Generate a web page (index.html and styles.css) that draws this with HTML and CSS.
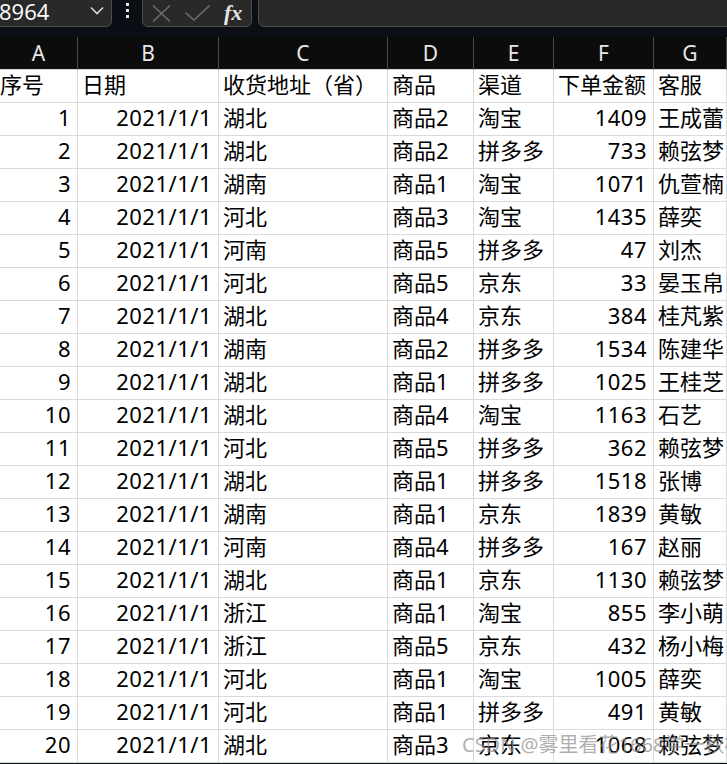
FILE: index.html
```html
<!DOCTYPE html>
<html lang="zh-CN">
<head>
<meta charset="utf-8">
<title>Sheet</title>
<link rel="stylesheet" href="styles.css">
</head>
<body>
<div class="topbar">
  <div class="namebox">
    <span class="ref">8964</span>
    <svg class="chev" width="14" height="9" viewBox="0 0 14 9"><path d="M1 1.5 L7 7.5 L13 1.5" fill="none" stroke="#d8d8d8" stroke-width="1.6"/></svg>
  </div>
  <svg class="dots" width="5" height="16" viewBox="0 0 5 16"><rect x="1" y="1" width="3" height="3" fill="#e6e6e6"/><rect x="1" y="7" width="3" height="3" fill="#e6e6e6"/><rect x="1" y="13" width="3" height="3" fill="#e6e6e6"/></svg>
  <div class="fxbox">
    <svg class="ico" width="19" height="17" viewBox="0 0 19 17"><path d="M1 0.5 L18 16.5 M18 0.5 L1 16.5" stroke="#6a6a6a" stroke-width="1.6" fill="none"/></svg>
    <svg class="ico" width="25" height="16" viewBox="0 0 25 16"><path d="M0.5 7.5 L9 15 L24.5 0.5" stroke="#6a6a6a" stroke-width="1.6" fill="none"/></svg>
    <span class="fx">fx</span>
  </div>
  <div class="inputbox"></div>
</div>
<div class="gap"></div>
<div class="sheet">
  <div class="h">A</div><div class="h">B</div><div class="h">C</div><div class="h">D</div><div class="h">E</div><div class="h">F</div><div class="h">G</div>

  <div class="c a">序号</div><div class="c">日期</div><div class="c">收货地址（省）</div><div class="c">商品</div><div class="c">渠道</div><div class="c">下单金额</div><div class="c">客服</div>

  <div class="c r">1</div><div class="c r">2021/1/1</div><div class="c">湖北</div><div class="c">商品2</div><div class="c">淘宝</div><div class="c r">1409</div><div class="c">王成蕾</div>
  <div class="c r">2</div><div class="c r">2021/1/1</div><div class="c">湖北</div><div class="c">商品2</div><div class="c">拼多多</div><div class="c r">733</div><div class="c">赖弦梦</div>
  <div class="c r">3</div><div class="c r">2021/1/1</div><div class="c">湖南</div><div class="c">商品1</div><div class="c">淘宝</div><div class="c r">1071</div><div class="c">仇萱楠</div>
  <div class="c r">4</div><div class="c r">2021/1/1</div><div class="c">河北</div><div class="c">商品3</div><div class="c">淘宝</div><div class="c r">1435</div><div class="c">薛奕</div>
  <div class="c r">5</div><div class="c r">2021/1/1</div><div class="c">河南</div><div class="c">商品5</div><div class="c">拼多多</div><div class="c r">47</div><div class="c">刘杰</div>
  <div class="c r">6</div><div class="c r">2021/1/1</div><div class="c">河北</div><div class="c">商品5</div><div class="c">京东</div><div class="c r">33</div><div class="c">晏玉帛</div>
  <div class="c r">7</div><div class="c r">2021/1/1</div><div class="c">湖北</div><div class="c">商品4</div><div class="c">京东</div><div class="c r">384</div><div class="c">桂芃紫</div>
  <div class="c r">8</div><div class="c r">2021/1/1</div><div class="c">湖南</div><div class="c">商品2</div><div class="c">拼多多</div><div class="c r">1534</div><div class="c">陈建华</div>
  <div class="c r">9</div><div class="c r">2021/1/1</div><div class="c">湖北</div><div class="c">商品1</div><div class="c">拼多多</div><div class="c r">1025</div><div class="c">王桂芝</div>
  <div class="c r">10</div><div class="c r">2021/1/1</div><div class="c">湖北</div><div class="c">商品4</div><div class="c">淘宝</div><div class="c r">1163</div><div class="c">石艺</div>
  <div class="c r">11</div><div class="c r">2021/1/1</div><div class="c">河北</div><div class="c">商品5</div><div class="c">拼多多</div><div class="c r">362</div><div class="c">赖弦梦</div>
  <div class="c r">12</div><div class="c r">2021/1/1</div><div class="c">湖北</div><div class="c">商品1</div><div class="c">拼多多</div><div class="c r">1518</div><div class="c">张博</div>
  <div class="c r">13</div><div class="c r">2021/1/1</div><div class="c">湖南</div><div class="c">商品1</div><div class="c">京东</div><div class="c r">1839</div><div class="c">黄敏</div>
  <div class="c r">14</div><div class="c r">2021/1/1</div><div class="c">河南</div><div class="c">商品4</div><div class="c">拼多多</div><div class="c r">167</div><div class="c">赵丽</div>
  <div class="c r">15</div><div class="c r">2021/1/1</div><div class="c">湖北</div><div class="c">商品1</div><div class="c">京东</div><div class="c r">1130</div><div class="c">赖弦梦</div>
  <div class="c r">16</div><div class="c r">2021/1/1</div><div class="c">浙江</div><div class="c">商品1</div><div class="c">淘宝</div><div class="c r">855</div><div class="c">李小萌</div>
  <div class="c r">17</div><div class="c r">2021/1/1</div><div class="c">浙江</div><div class="c">商品5</div><div class="c">京东</div><div class="c r">432</div><div class="c">杨小梅</div>
  <div class="c r">18</div><div class="c r">2021/1/1</div><div class="c">河北</div><div class="c">商品1</div><div class="c">淘宝</div><div class="c r">1005</div><div class="c">薛奕</div>
  <div class="c r">19</div><div class="c r">2021/1/1</div><div class="c">河北</div><div class="c">商品1</div><div class="c">拼多多</div><div class="c r">491</div><div class="c">黄敏</div>
  <div class="c r">20</div><div class="c r">2021/1/1</div><div class="c">湖北</div><div class="c">商品3</div><div class="c">京东</div><div class="c r">1068</div><div class="c">赖弦梦</div>
</div>
<div class="watermark">CSDN @雾里看花1668学一秋枫</div>
</body>
</html>
```

FILE: styles.css
```css
html, body {
  margin: 0;
  padding: 0;
}
body {
  width: 727px;
  height: 764px;
  overflow: hidden;
  background: #0b0e14;
  position: relative;
  font-family: "Noto Sans", "Noto Sans CJK SC", sans-serif;
}
.topbar {
  height: 27px;
  display: flex;
  align-items: flex-end;
  background: #0b0e14;
}
.namebox {
  box-sizing: border-box;
  margin-left: -10px;
  width: 122px;
  height: 34px;
  border: 1px solid #4e4e4e;
  border-radius: 6px;
  background: #292929;
  display: flex;
  align-items: center;
  justify-content: space-between;
  padding: 0 7px 0 8px;
}
.ref {
  color: #ffffff;
  font-family: "Open Sans", "Noto Sans", sans-serif;
  font-size: 22px;
  line-height: 20px;
  margin-top: 2px;
}
.chev {
  display: block;
}
.dots {
  display: block;
  margin: 0 0 9px 13px;
}
.fxbox {
  box-sizing: border-box;
  margin-left: 12px;
  width: 110px;
  height: 34px;
  border: 1px solid #4e4e4e;
  border-radius: 6px;
  background: #292929;
  display: flex;
  align-items: center;
  gap: 14px;
  padding: 6px 0 0 9px;
}
.ico {
  display: block;
}
.fx {
  font-family: "Liberation Serif", "DejaVu Serif", serif;
  font-style: italic;
  font-weight: bold;
  font-size: 22px;
  line-height: 20px;
  color: #e6e6e6;
}
.inputbox {
  box-sizing: border-box;
  margin-left: 6px;
  margin-right: -10px;
  flex: 1;
  height: 34px;
  border: 1px solid #4e4e4e;
  border-radius: 6px;
  background: #292929;
}
.gap {
  height: 10px;
}
.sheet {
  display: grid;
  grid-template-columns: 78px 141px 169px 86px 80px 100px 1fr;
  grid-auto-rows: 33px;
  background: #ffffff;
}
.h {
  box-sizing: border-box;
  background: #0c0c0c;
  color: #e8e8e8;
  font-size: 21px;
  line-height: 32px;
  text-align: center;
  border-right: 1px solid #4a4a4a;
  border-bottom: 1px solid #d4d4d4;
}
.c {
  box-sizing: border-box;
  color: #000000;
  font-size: 22px;
  line-height: 29px;
  padding: 0 4px;
  white-space: nowrap;
  overflow: hidden;
  border-right: 1px solid #dadada;
  border-bottom: 1px solid #dadada;
}
.c.a {
  padding-left: 0;
}
.c.r {
  text-align: right;
  padding-right: 6px;
  letter-spacing: 0.5px;
}
.watermark {
  position: absolute;
  left: 462px;
  top: 732px;
  font-size: 20px;
  line-height: 26px;
  color: rgba(140, 140, 140, 0.7);
  white-space: nowrap;
}
```
